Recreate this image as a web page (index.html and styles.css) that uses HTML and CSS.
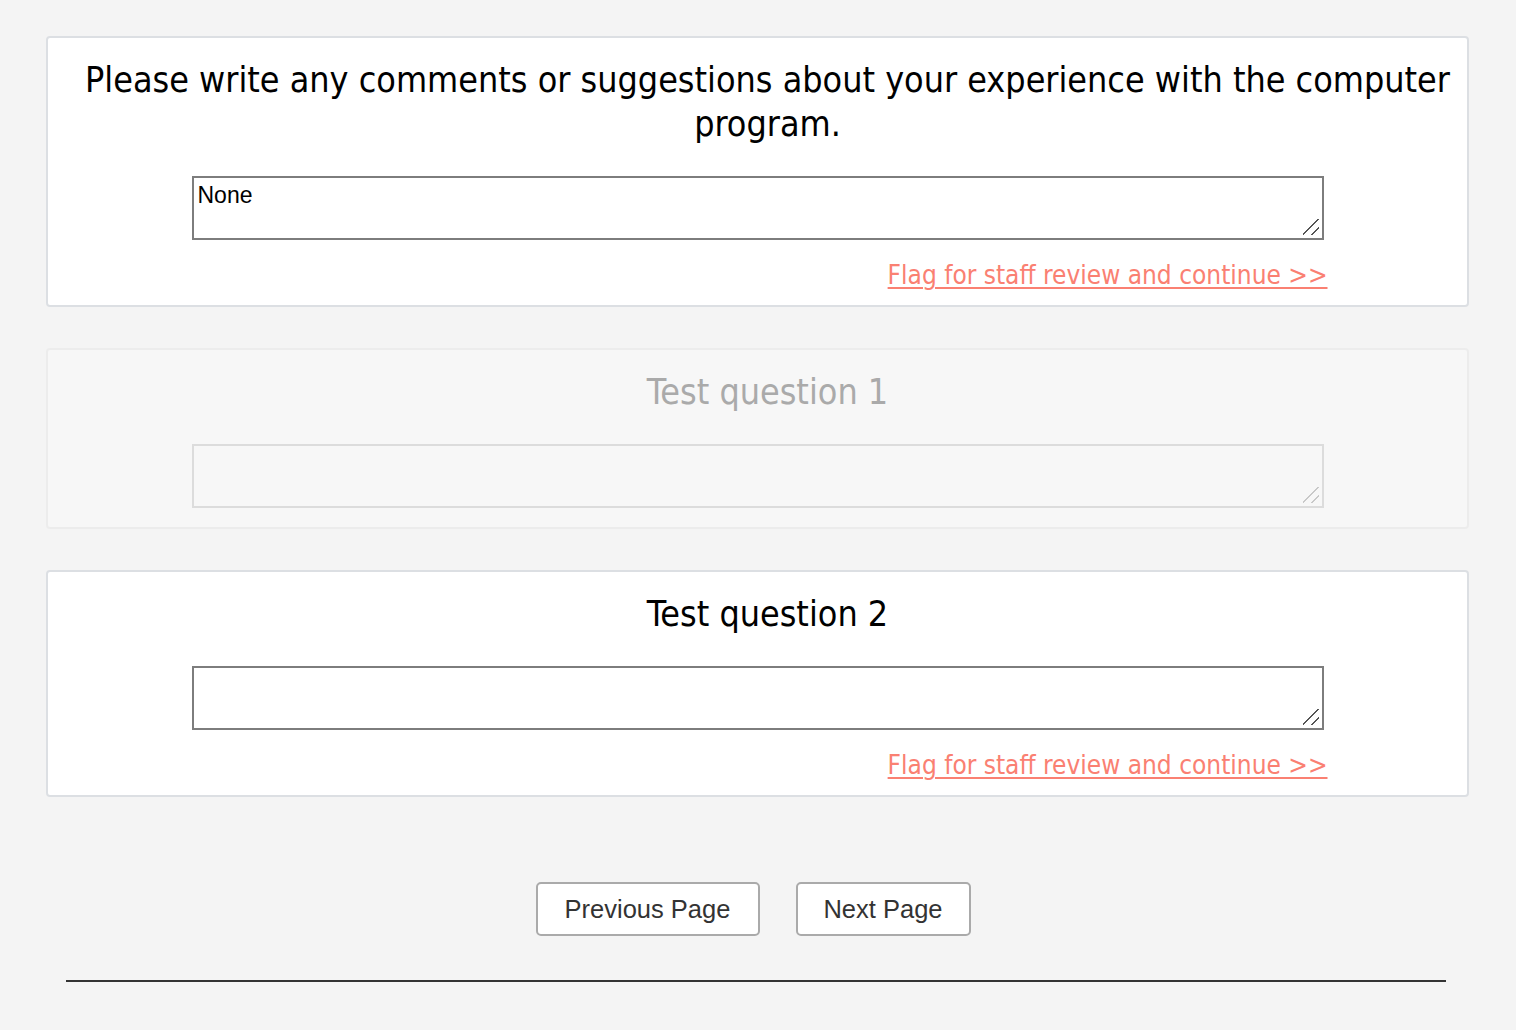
FILE: index.html
```html
<!DOCTYPE html>
<html lang="en">
<head>
<meta charset="utf-8">
<title>Survey comments</title>
<link rel="stylesheet" href="styles.css">
</head>
<body>
<main class="page">
  <section class="card">
    <h2 class="q-title">Please write any comments or suggestions about your experience with the computer program.</h2>
    <textarea class="answer">None</textarea>
    <div class="flag-row"><a class="flag" href="#">Flag for staff review and continue &gt;&gt;</a></div>
  </section>

  <section class="card card-disabled">
    <h2 class="q-title">Test question 1</h2>
    <textarea class="answer" disabled></textarea>
  </section>

  <section class="card">
    <h2 class="q-title">Test question 2</h2>
    <textarea class="answer"></textarea>
    <div class="flag-row"><a class="flag" href="#">Flag for staff review and continue &gt;&gt;</a></div>
  </section>

  <nav class="pager">
    <button class="btn btn-prev" type="button">Previous Page</button>
    <button class="btn btn-next" type="button">Next Page</button>
  </nav>

  <hr class="rule">
</main>
</body>
</html>
```

FILE: styles.css
```css
html, body {
  margin: 0;
  padding: 0;
  background: #f4f4f4;
}

body {
  font-family: "DejaVu Sans Condensed", Lato, sans-serif;
  font-stretch: condensed;
  color: #000;
}

.page {
  padding: 36px 47px 40px 46px;
  display: flex;
  flex-direction: column;
}

.card {
  background: #fff;
  border: 2px solid #dcdfe3;
  border-radius: 4px;
  padding: 20px 0 19px;
  margin-bottom: 41px;
  display: flex;
  flex-direction: column;
  align-items: center;
}

.q-title {
  margin: 0 0 30px;
  padding-left: 20px;
  font-size: 35.6px;
  line-height: 44px;
  font-weight: 400;
  text-align: center;
  align-self: stretch;
}

.answer {
  display: block;
  box-sizing: border-box;
  width: 1132px;
  height: 64px;
  margin: 0;
  padding: 5px 4px;
  border: 2px solid #7d7d7d;
  border-radius: 0;
  background-color: #fff;
  background-image:
    linear-gradient(135deg, transparent 0 10.4px, #555 10.4px 11.9px, transparent 11.9px 16.6px, #555 16.6px 18.1px, transparent 18.1px);
  background-size: 16px 16px;
  background-position: right 3px bottom 3px;
  background-repeat: no-repeat;
  font-family: "Liberation Sans", Arial, sans-serif;
  font-stretch: normal;
  font-size: 23px;
  line-height: 24px;
  color: #000;
  resize: none;
}

.flag-row {
  width: 1140px;
  margin-top: 21px;
  margin-bottom: -3px;
  text-align: right;
  font-size: 26px;
  line-height: 28px;
}

.flag {
  color: #fa8072;
  text-decoration: underline;
  text-underline-offset: 3px;
  text-decoration-thickness: 2px;
}

.card-disabled {
  background: #f7f7f7;
  border-color: #ececec;
}

.card-disabled .q-title {
  color: #aaa;
}

.card-disabled .answer {
  background-color: #f7f7f7;
  border-color: #dcdcdc;
  background-image:
    linear-gradient(135deg, transparent 0 10.4px, #c8c8c8 10.4px 11.9px, transparent 11.9px 16.6px, #c8c8c8 16.6px 18.1px, transparent 18.1px);
}

.pager {
  display: flex;
  justify-content: center;
  gap: 36px;
  margin-top: 44px;
  padding-right: 9px;
}

.btn {
  box-sizing: border-box;
  height: 54px;
  padding: 0;
  background: #fff;
  border: 2px solid #aaa;
  border-radius: 5px;
  font-family: "Liberation Sans", Arial, sans-serif;
  font-size: 25.5px;
  color: #333;
  text-align: center;
  cursor: pointer;
}

.btn-prev {
  width: 224px;
}

.btn-next {
  width: 175px;
}

.rule {
  width: 1380px;
  margin: 44px auto 0;
  border: 0;
  border-top: 2px solid #333;
  height: 0;
  align-self: center;
  position: relative;
  left: -2px;
}
```
